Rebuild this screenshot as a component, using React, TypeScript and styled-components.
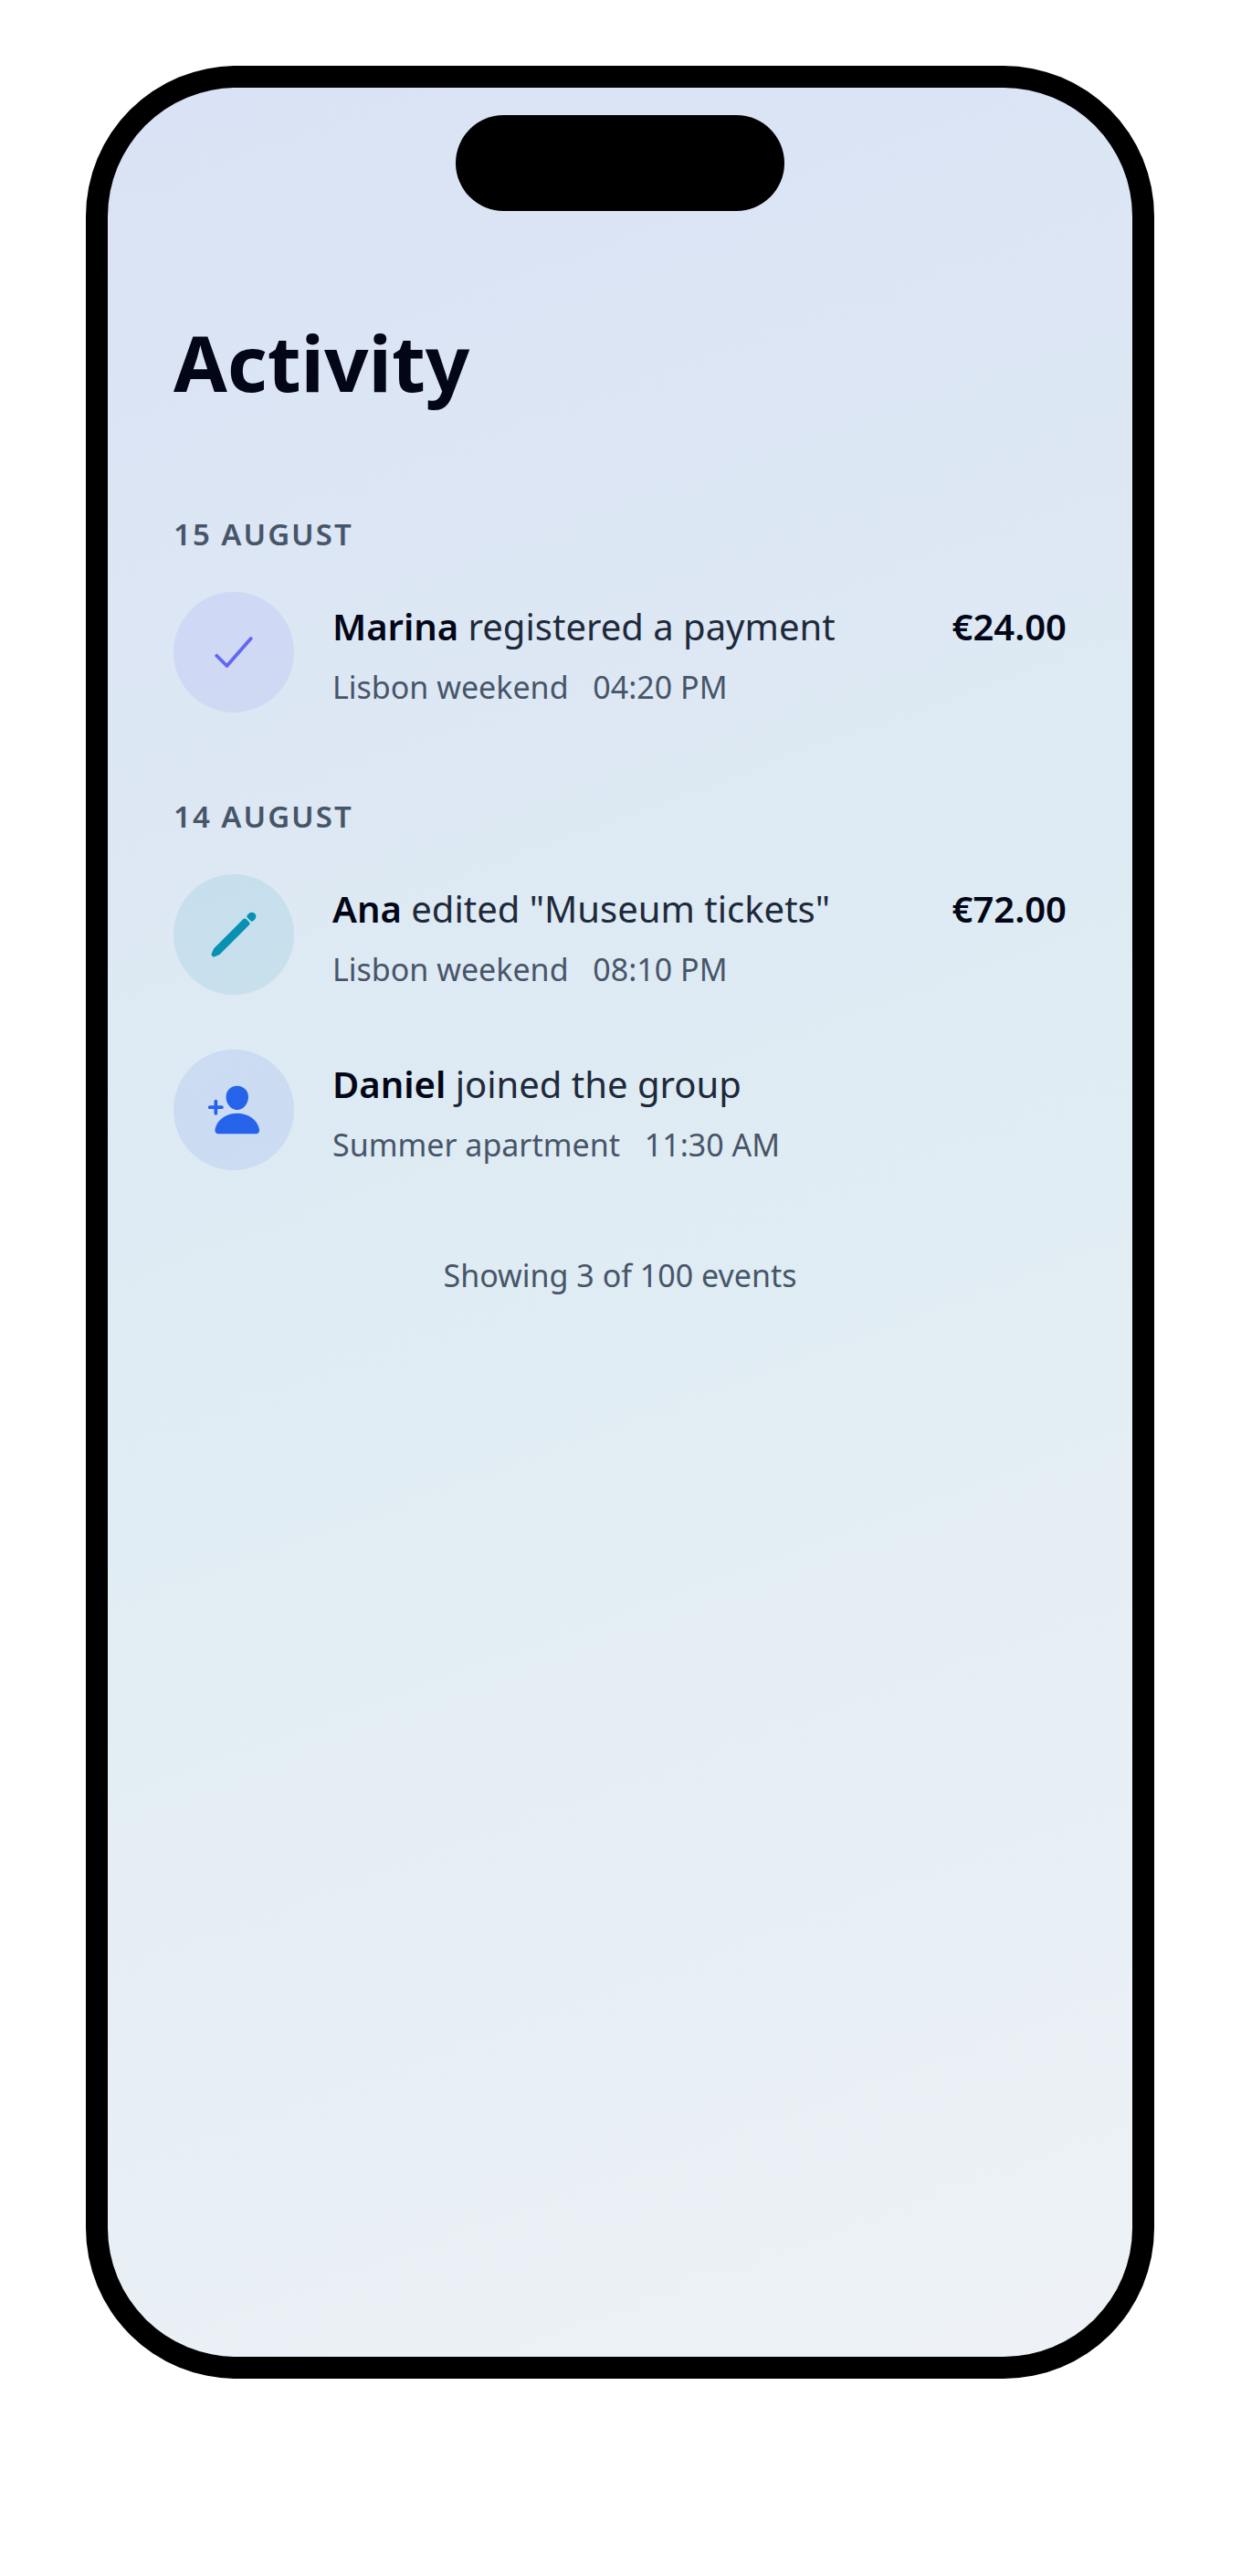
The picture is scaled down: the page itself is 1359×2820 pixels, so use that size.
import React from 'react';
import styled, { createGlobalStyle } from 'styled-components';
import { IoCheckmark, IoPencil, IoPersonAdd } from 'react-icons/io5';

const GlobalStyle = createGlobalStyle`
  *, *::before, *::after {
    box-sizing: border-box;
  }
  body {
    margin: 0;
    background: #ffffff;
    font-family: 'Noto Sans', 'Open Sans', sans-serif;
  }
`;

const Page = styled.main`
  padding: 72px 95px 216px 94px;
`;

const Phone = styled.div`
  display: flex;
  max-width: 1170px;
  margin: 0 auto;
  aspect-ratio: 1170 / 2532;
  padding: 24px;
  border-radius: 165px;
  background: #000000;
`;

const Screen = styled.div`
  display: flex;
  flex: 1;
  flex-direction: column;
  min-width: 0;
  border-radius: 141px;
  background: linear-gradient(160deg, #dae2f5 0%, #dfecf3 50%, #eef2f6 100%);
`;

const Island = styled.div`
  flex: none;
  align-self: center;
  width: 360px;
  height: 105px;
  margin-top: 30px;
  border-radius: 54px;
  background: #000000;
`;

const Content = styled.div`
  display: flex;
  flex-direction: column;
  padding: 105px 72px 72px;
`;

const Title = styled.h1`
  margin: 0 0 105px;
  color: #020617;
  font-size: 85px;
  font-weight: 700;
  line-height: 120px;
`;

const Groups = styled.div`
  display: flex;
  flex-direction: column;
  gap: 90px;
`;

const DayHeading = styled.h2`
  margin: 0 0 39px;
  color: #475569;
  font-size: 33px;
  font-weight: 600;
  line-height: 48px;
  letter-spacing: 2px;
  text-transform: uppercase;
`;

const EventList = styled.ul`
  display: flex;
  flex-direction: column;
  gap: 60px;
  margin: 0;
  padding: 0;
  list-style: none;
`;

const EventRow = styled.li`
  display: flex;
  align-items: flex-start;
  gap: 42px;
`;

const Badge = styled.span<{ $color: string; $tint: string }>`
  display: flex;
  flex: none;
  align-items: center;
  justify-content: center;
  width: 132px;
  height: 132px;
  border-radius: 50%;
  background: ${({ $tint }) => $tint};
  color: ${({ $color }) => $color};
  font-size: 60px;
`;

const Details = styled.div`
  flex: 1;
  min-width: 0;
  padding-top: 6px;
`;

const Summary = styled.p`
  margin: 0 0 9px;
  color: #1e293b;
  font-size: 40px;
  line-height: 64px;
`;

const Actor = styled.strong`
  color: #020617;
  font-weight: 600;
`;

const Meta = styled.p`
  margin: 0;
  color: #475569;
  font-size: 34px;
  line-height: 50px;
`;

const Dot = styled.span`
  color: #e2e8f0;
`;

const Amount = styled.span`
  flex: none;
  padding-top: 6px;
  color: #020617;
  font-size: 40px;
  font-weight: 600;
  line-height: 64px;
`;

const Footer = styled.p`
  margin: 90px 0 0;
  color: #475569;
  font-size: 34px;
  line-height: 50px;
  text-align: center;
`;

const kinds = {
  payment: { Icon: IoCheckmark, color: '#6366f1', tint: 'rgba(99, 102, 241, 0.1)' },
  edit: { Icon: IoPencil, color: '#0891b2', tint: 'rgba(8, 145, 178, 0.1)' },
  join: { Icon: IoPersonAdd, color: '#2563eb', tint: 'rgba(37, 99, 235, 0.1)' },
};

interface ActivityEvent {
  kind: keyof typeof kinds;
  actor: string;
  action: string;
  group: string;
  time: string;
  amount?: string;
}

const days: { label: string; events: ActivityEvent[] }[] = [
  {
    label: '15 August',
    events: [
      {
        kind: 'payment',
        actor: 'Marina',
        action: 'registered a payment',
        group: 'Lisbon weekend',
        time: '04:20 PM',
        amount: '€24.00',
      },
    ],
  },
  {
    label: '14 August',
    events: [
      {
        kind: 'edit',
        actor: 'Ana',
        action: 'edited "Museum tickets"',
        group: 'Lisbon weekend',
        time: '08:10 PM',
        amount: '€72.00',
      },
      {
        kind: 'join',
        actor: 'Daniel',
        action: 'joined the group',
        group: 'Summer apartment',
        time: '11:30 AM',
      },
    ],
  },
];

function EventItem({ event }: { event: ActivityEvent }) {
  const { Icon, color, tint } = kinds[event.kind];
  return (
    <EventRow>
      <Badge $color={color} $tint={tint}>
        <Icon aria-hidden />
      </Badge>
      <Details>
        <Summary>
          <Actor>{event.actor}</Actor> {event.action}
        </Summary>
        <Meta>
          {event.group} <Dot>·</Dot> {event.time}
        </Meta>
      </Details>
      {event.amount && <Amount>{event.amount}</Amount>}
    </EventRow>
  );
}

export default function App() {
  return (
    <>
      <GlobalStyle />
      <Page>
        <Phone>
          <Screen>
            <Island />
            <Content>
              <Title>Activity</Title>
              <Groups>
                {days.map((day) => (
                  <section key={day.label}>
                    <DayHeading>{day.label}</DayHeading>
                    <EventList>
                      {day.events.map((event) => (
                        <EventItem key={event.actor} event={event} />
                      ))}
                    </EventList>
                  </section>
                ))}
              </Groups>
              <Footer>Showing 3 of 100 events</Footer>
            </Content>
          </Screen>
        </Phone>
      </Page>
    </>
  );
}
